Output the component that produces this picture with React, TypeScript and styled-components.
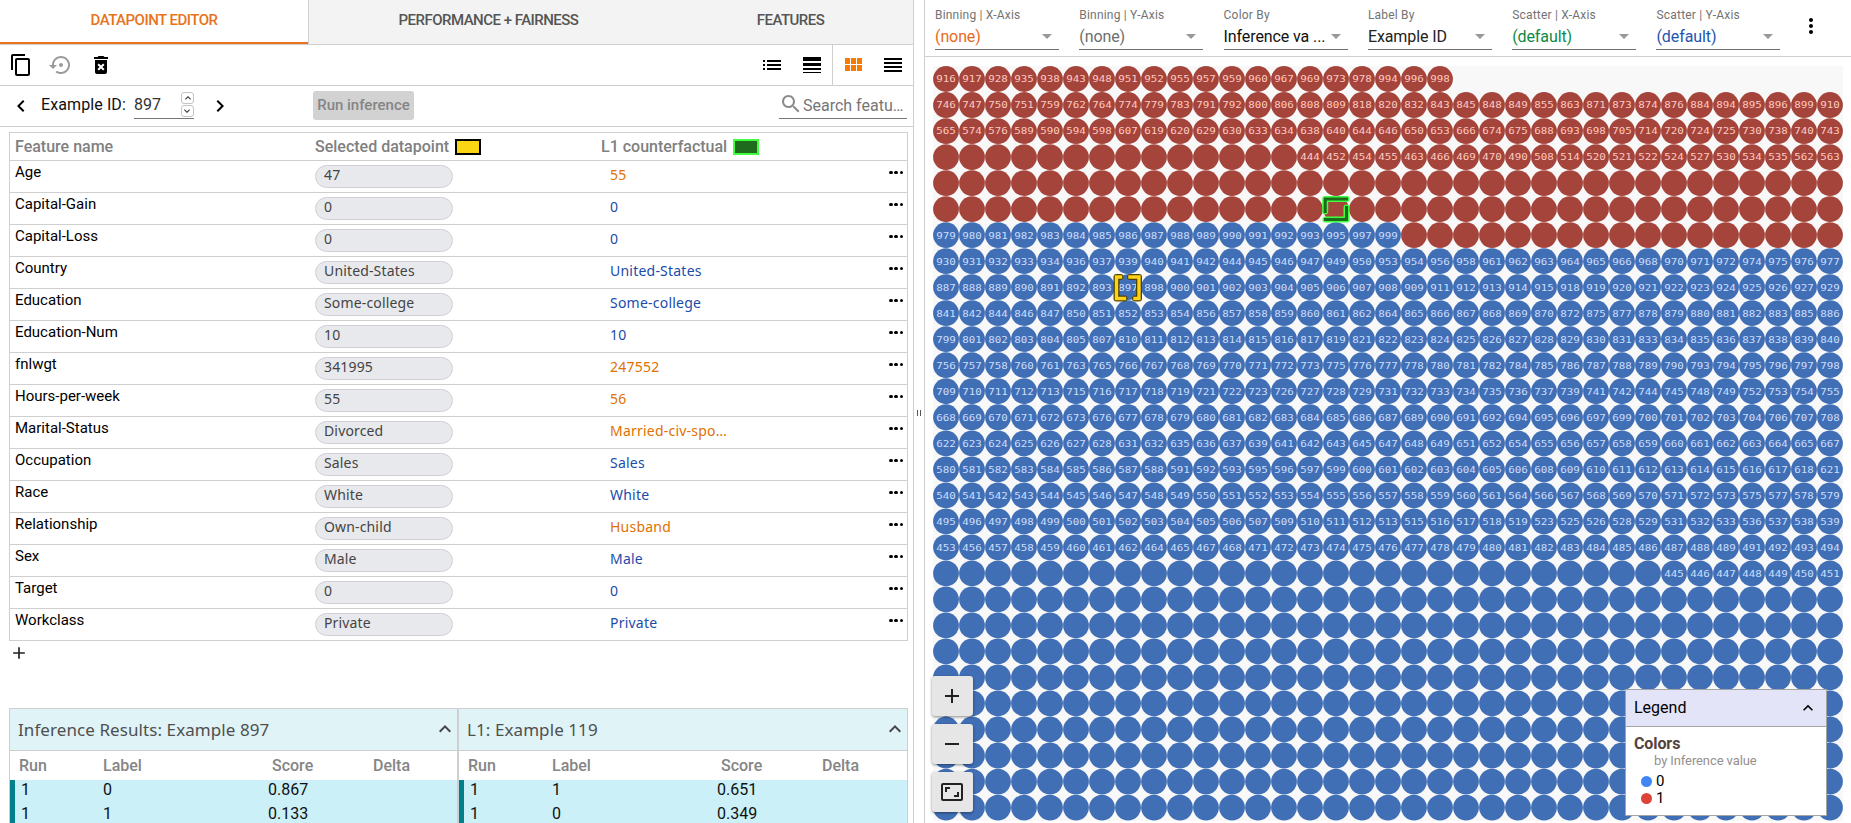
import React from "react";
import styled, { createGlobalStyle } from "styled-components";

const LINE = "#cfcfcf";
const HUMANIST = '"Noto Sans", "Open Sans", sans-serif';

const GlobalStyle = createGlobalStyle`
  *, *::before, *::after { box-sizing: border-box; }
  html, body { margin: 0; padding: 0; background: #fff; overflow: hidden; }
  body { font-family: Roboto, "Liberation Sans", sans-serif; color: #000; }
`;

/* ---------- data ---------- */

const FEATURES: { name: string; value: string; other: string; changed?: boolean }[] = [
  { name: "Age", value: "47", other: "55", changed: true },
  { name: "Capital-Gain", value: "0", other: "0" },
  { name: "Capital-Loss", value: "0", other: "0" },
  { name: "Country", value: "United-States", other: "United-States" },
  { name: "Education", value: "Some-college", other: "Some-college" },
  { name: "Education-Num", value: "10", other: "10" },
  { name: "fnlwgt", value: "341995", other: "247552", changed: true },
  { name: "Hours-per-week", value: "55", other: "56", changed: true },
  { name: "Marital-Status", value: "Divorced", other: "Married-civ-spo…", changed: true },
  { name: "Occupation", value: "Sales", other: "Sales" },
  { name: "Race", value: "White", other: "White" },
  { name: "Relationship", value: "Own-child", other: "Husband", changed: true },
  { name: "Sex", value: "Male", other: "Male" },
  { name: "Target", value: "0", other: "0" },
  { name: "Workclass", value: "Private", other: "Private" },
];

const CONTROLS = [
  { label: "Binning | X-Axis", value: "(none)", color: "#e8681a" },
  { label: "Binning | Y-Axis", value: "(none)", color: "#6e6e6e" },
  { label: "Color By", value: "Inference va ...", color: "#111" },
  { label: "Label By", value: "Example ID", color: "#222" },
  { label: "Scatter | X-Axis", value: "(default)", color: "#0e8a44" },
  { label: "Scatter | Y-Axis", value: "(default)", color: "#2454b0" },
];

const RESULTS = [
  { title: "Inference Results: Example 897", width: 449, rows: [["1", "0", "0.867"], ["1", "1", "0.133"]] },
  { title: "L1: Example 119", width: 450, rows: [["1", "1", "0.651"], ["1", "0", "0.349"]] },
];

const COLS = 35;
const ROWS = 29;
const PITCH = 26;

const RED_ROWS = [
  "916 917 928 935 938 943 948 951 952 955 957 959 960 967 969 973 978 994 996 998",
  "746 747 750 751 759 762 764 774 779 783 791 792 800 806 808 809 818 820 832 843 845 848 849 855 863 871 873 874 876 884 894 895 896 899 910",
  "565 574 576 589 590 594 598 607 619 620 629 630 633 634 638 640 644 646 650 653 666 674 675 688 693 698 705 714 720 724 725 730 738 740 743",
  "444 452 454 455 463 466 469 470 490 508 514 520 521 522 524 527 530 534 535 562 563",
].map((r) => r.split(" ").map(Number));

type Dot = { col: number; row: number; red: boolean; id?: number };

function buildDots(): Dot[] {
  const redIds = new Set(RED_ROWS.flat());
  const blueIds: number[] = [];
  for (let i = 445; i <= 999; i++) if (!redIds.has(i)) blueIds.push(i);
  const dots: Dot[] = [];
  for (let row = 0; row < ROWS; row++) {
    for (let col = 0; col < COLS; col++) {
      if (row === 0 && col > 19) continue;
      const red = row < 6 || (row === 6 && col > 17);
      let id: number | undefined;
      if (red) {
        if (row < 3) id = RED_ROWS[row][col];
        else if (row === 3) id = RED_ROWS[3][col - 14];
      } else {
        // blue labels run upwards from the end of row 19
        id = blueIds[(19 - row) * COLS + col - 28];
      }
      dots.push({ col, row, red, id });
    }
  }
  return dots;
}

const DOTS = buildDots();

/* ---------- icons ---------- */

const ICONS = {
  copy: "M16 1H4c-1.1 0-2 .9-2 2v14h2V3h12V1zm3 4H8c-1.1 0-2 .9-2 2v14c0 1.1.9 2 2 2h11c1.1 0 2-.9 2-2V7c0-1.1-.9-2-2-2zm0 16H8V7h11v14z",
  restore:
    "M14 12c0-1.1-.9-2-2-2s-2 .9-2 2 .9 2 2 2 2-.9 2-2zm-2-9c-4.97 0-9 4.03-9 9H0l4 4 4-4H5c0-3.87 3.13-7 7-7s7 3.13 7 7-3.13 7-7 7c-1.51 0-2.91-.49-4.06-1.3l-1.42 1.44C8.04 20.3 9.94 21 12 21c4.97 0 9-4.03 9-9s-4.03-9-9-9z",
  remove:
    "M6 19c0 1.1.9 2 2 2h8c1.1 0 2-.9 2-2V7H6v12zm2.46-7.12l1.41-1.41L12 12.59l2.12-2.12 1.41 1.41L13.41 14l2.12 2.12-1.41 1.41L12 15.41l-2.12 2.12-1.41-1.41L10.59 14l-2.13-2.12zM15.5 4l-1-1h-5l-1 1H5v2h14V4z",
  list: "M3 13h2v-2H3v2zm0 4h2v-2H3v2zm0-8h2V7H3v2zm4 4h14v-2H7v2zm0 4h14v-2H7v2zM7 7v2h14V7H7z",
  weight: "M3 17h18v-2H3v2zm0 3h18v-1H3v1zm0-7h18v-3H3v3zm0-9v4h18V4H3z",
  grid: "M4 11h5V5H4v6zm0 7h5v-6H4v6zm6 0h5v-6h-5v6zm6 0h5v-6h-5v6zm-6-7h5V5h-5v6zm6-6v6h5V5h-5z",
  reorder: "M3 15h18v-2H3v2zm0 4h18v-2H3v2zm0-8h18V9H3v2zm0-6v2h18V5H3z",
  left: "M15.41 7.41L14 6l-6 6 6 6 1.41-1.41L10.83 12z",
  right: "M10 6L8.59 7.41 13.17 12l-4.58 4.59L10 18l6-6z",
  up: "M12 8l-6 6 1.41 1.41L12 10.83l4.59 4.58L18 14z",
  search:
    "M15.5 14h-.79l-.28-.27C15.41 12.59 16 11.11 16 9.5 16 5.91 13.09 3 9.5 3S3 5.91 3 9.5 5.91 16 9.5 16c1.61 0 3.09-.59 4.23-1.57l.27.28v.79l5 4.99L20.49 19l-4.99-5zm-6 0C7.01 14 5 11.99 5 9.5S7.01 5 9.5 5 14 7.01 14 9.5 11.99 14 9.5 14z",
  more: "M12 8c1.1 0 2-.9 2-2s-.9-2-2-2-2 .9-2 2 .9 2 2 2zm0 2c-1.1 0-2 .9-2 2s.9 2 2 2 2-.9 2-2-.9-2-2-2zm0 6c-1.1 0-2 .9-2 2s.9 2 2 2 2-.9 2-2-.9-2-2-2z",
  plus: "M19 13h-6v6h-2v-6H5v-2h6V5h2v6h6v2z",
  minus: "M19 13H5v-2h14v2z",
  fit: "M19 12h-2v3h-3v2h5v-5zM7 9h3V7H5v5h2V9zm14-6H3c-1.1 0-2 .9-2 2v14c0 1.1.9 2 2 2h18c1.1 0 2-.9 2-2V5c0-1.1-.9-2-2-2zm0 16.01H3V4.99h18v14.02z",
};

const Svg = styled.svg`
  display: block;
  flex: none;
`;

function Icon({ name, size = 24, color = "#000" }: { name: keyof typeof ICONS; size?: number; color?: string }) {
  return (
    <Svg width={size} height={size} viewBox="0 0 24 24" fill={color}>
      <path d={ICONS[name]} />
    </Svg>
  );
}

/* ---------- frame ---------- */

const Page = styled.div`
  display: flex;
  width: 1851px;
  height: 823px;
  overflow: hidden;
`;

const Editor = styled.section`
  display: flex;
  flex-direction: column;
  width: 914px;
  border-right: 1px solid ${LINE};
  & > * {
    flex: none;
  }
`;

const Splitter = styled.div`
  display: flex;
  align-items: center;
  justify-content: center;
  gap: 2px;
  width: 10px;
  padding: 2px 1px 0 0;
`;

const Grip = styled.span`
  width: 1px;
  height: 6px;
  background: #555;
`;

const Visual = styled.section`
  display: flex;
  flex-direction: column;
  flex: 1;
  border-left: 1px solid ${LINE};
`;

/* ---------- editor ---------- */

const Tabs = styled.nav`
  display: flex;
  height: 45px;
  border-bottom: 1px solid ${LINE};
`;

const Tab = styled.div<{ $width: number; $active?: boolean }>`
  width: ${(p) => p.$width}px;
  padding-top: 10px;
  text-align: center;
  font-size: 15px;
  line-height: 20px;
  letter-spacing: -0.52px;
  font-weight: 500;
  color: ${(p) => (p.$active ? "#e8731c" : "#555")};
  background: ${(p) => (p.$active ? "#fff" : "#f3f3f3")};
  border-bottom: ${(p) => (p.$active ? "2px solid #e8731c" : "0")};
`;

const TabDivider = styled.div`
  width: 1px;
  background: ${LINE};
`;

const Toolbar = styled.div`
  display: flex;
  align-items: center;
  justify-content: space-between;
  height: 41px;
  padding: 0 8px 0 9px;
  border-bottom: 1px solid ${LINE};
`;

const IconGroup = styled.div<{ $divided?: boolean }>`
  display: flex;
  align-items: center;
  gap: 16px;
  height: 40px;
  padding-left: ${(p) => (p.$divided ? 8 : 0)}px;
  margin-left: ${(p) => (p.$divided ? 8 : 0)}px;
  border-left: ${(p) => (p.$divided ? `1px solid ${LINE}` : "0")};
`;

const ToolSet = styled.div`
  display: flex;
  height: 40px;
`;

const PickerBar = styled.div`
  display: flex;
  height: 41px;
  padding: 0 6px 0 9px;
  border-bottom: 1px solid ${LINE};
`;

const Step = styled.div`
  padding-top: 8px;
`;

const PickerLabel = styled.label`
  flex: none;
  width: 101px;
  padding: 9px 0 0 8px;
  font-size: 16px;
  line-height: 20px;
  color: #111;
  letter-spacing: 0.1px;
  white-space: nowrap;
`;

const NumberField = styled.div`
  display: flex;
  justify-content: space-between;
  width: 60px;
  height: 33px;
  margin-right: 14px;
  padding: 6px 0 0;
  border-bottom: 1px solid #777;
`;

const NumberText = styled.span`
  padding-top: 3px;
  font-size: 16px;
  line-height: 20px;
  color: #333;
`;

const Spinner = styled.span`
  display: flex;
  flex-direction: column;
  gap: 1px;
`;

const SpinButton = styled.span<{ $down?: boolean }>`
  display: flex;
  align-items: center;
  justify-content: center;
  width: 13px;
  height: 12px;
  border: 1px solid #c4c4c4;
  border-radius: 3px;
  transform: ${(p) => (p.$down ? "rotate(180deg)" : "none")};
`;

const RunButton = styled.button`
  width: 101px;
  height: 29px;
  margin: 5px 0 0 81px;
  padding: 0 0 1px;
  border: 0;
  border-radius: 3px;
  background: #d2d2d2;
  color: #858585;
  font: 500 15px/28px Roboto, sans-serif;
  white-space: nowrap;
`;

const SearchField = styled.div`
  display: flex;
  width: 128px;
  height: 33px;
  margin-left: auto;
  padding-top: 6px;
  border-bottom: 1px solid #777;
`;

const SearchText = styled.span`
  padding-top: 4px;
  font-size: 16px;
  line-height: 20px;
  color: #767676;
  white-space: nowrap;
`;

const Table = styled.div`
  margin: 5px 5px 0 9px;
  border: 1px solid ${LINE};
`;

const TableRow = styled.div<{ $head?: boolean }>`
  display: flex;
  height: ${(p) => (p.$head ? 27 : 32)}px;
  ${(p) => (p.$head ? "color: #808080; font-size: 16px;" : "")}
  & + & {
    border-top: 1px solid ${LINE};
  }
`;

const HeadCell = styled.div<{ $width: number; $inset?: number }>`
  display: flex;
  align-items: center;
  gap: 6px;
  width: ${(p) => p.$width}px;
  padding-left: ${(p) => p.$inset ?? 0}px;
  font-weight: 500;
  line-height: 26px;
  white-space: nowrap;
`;

const Swatch = styled.span<{ $fill: string; $edge: string }>`
  width: 26px;
  height: 16px;
  margin-top: 1px;
  background: ${(p) => p.$fill};
  border: 2px solid ${(p) => p.$edge};
`;

const NameCell = styled.div`
  width: 305px;
  padding: 2px 0 0 5px;
  font-size: 15px;
  line-height: 18px;
`;

const Pill = styled.div`
  width: 138px;
  height: 23px;
  margin-top: 4px;
  padding-left: 8px;
  border: 1px solid #d0d0d2;
  border-radius: 12px;
  background: #e8e9ec;
  color: #444;
  font: 14px/18px ${HUMANIST};
  letter-spacing: 0.15px;
`;

const OtherCell = styled.div<{ $changed?: boolean }>`
  flex: 1;
  padding: 3px 0 0 157px;
  color: ${(p) => (p.$changed ? "#e07000" : "#1b4bab")};
  font: 14px/22px ${HUMANIST};
  letter-spacing: 0.22px;
`;

const MoreCell = styled.div`
  display: flex;
  gap: 1.8px;
  padding: 10px 4px 0 0;
`;

const MoreDot = styled.span`
  width: 3.4px;
  height: 3.4px;
  border-radius: 50%;
  background: #000;
`;

const AddRow = styled.div`
  height: 67px;
  padding: 2px 0 0 9px;
`;

const Results = styled.div`
  display: flex;
  margin: 0 5px 0 9px;
`;

const ResultPanel = styled.div<{ $width: number }>`
  width: ${(p) => p.$width}px;
  height: 115px;
  border: 1px solid ${LINE};
  border-bottom: 0;
`;

const ResultHead = styled.div`
  display: flex;
  justify-content: space-between;
  height: 42px;
  padding: 8px 0 0 8px;
  background: #e0f3f7;
  border-bottom: 1px solid ${LINE};
  color: #4f4f4f;
  font: 17px/25px ${HUMANIST};
  letter-spacing: 0.08px;
`;

const ResultIcon = styled.div`
  width: 24px;
`;

const ResultRow = styled.div<{ $head?: boolean }>`
  display: grid;
  grid-template-columns: ${(p) => (p.$head ? "84px 169px 101px 1fr" : "82px 165px 101px 1fr")};
  height: ${(p) => (p.$head ? 29 : 24)}px;
  padding-left: ${(p) => (p.$head ? 9 : 6)}px;
  font-size: 16px;
  line-height: ${(p) => (p.$head ? 30 : 20)}px;
  font-weight: ${(p) => (p.$head ? 500 : 400)};
  color: ${(p) => (p.$head ? "#858585" : "#111")};
  background: ${(p) => (p.$head ? "#fff" : "#cbf0f7")};
  border-left: ${(p) => (p.$head ? "0" : "5px solid #00808a")};
`;

/* ---------- visualization ---------- */

const ControlBar = styled.div`
  display: flex;
  gap: 20.3px;
  height: 57px;
  padding-left: 10px;
  border-bottom: 1px solid ${LINE};
`;

const Control = styled.div`
  display: flex;
  flex-direction: column;
  width: 124px;
  height: 50px;
  padding-top: 7px;
  border-bottom: 1px solid #707070;
`;

const ControlLabel = styled.span`
  font-size: 12px;
  line-height: 16px;
  letter-spacing: 0.2px;
  color: #737373;
`;

const ControlValue = styled.span<{ $color: string }>`
  display: flex;
  justify-content: space-between;
  align-items: center;
  height: 26px;
  padding-right: 7px;
  font-size: 16px;
  letter-spacing: -0.1px;
  color: ${(p) => p.$color};
  white-space: nowrap;
`;

const Caret = styled.i`
  border: 5px solid transparent;
  border-top-color: #999;
  border-bottom: 0;
`;

const MenuButton = styled.div`
  margin-left: -2px;
  padding-top: 14px;
`;

const Stage = styled.div`
  position: relative;
  flex: 1;
  padding: 9px 0 0 8px;
`;

const Chart = styled.svg`
  display: block;
  background: #f8f8f8;
`;

const ZoomButtons = styled.div`
  position: absolute;
  left: 7px;
  bottom: 11px;
  display: flex;
  flex-direction: column;
  gap: 8px;
`;

const ZoomButton = styled.div`
  display: flex;
  align-items: center;
  justify-content: center;
  width: 41px;
  height: 40px;
  padding-right: 1px;
  border-radius: 3px;
  background: #e6e6e6;
  box-shadow: 0 1px 3px rgba(0, 0, 0, 0.45);
`;

const Legend = styled.div`
  position: absolute;
  right: 24px;
  bottom: 7px;
  width: 202px;
  height: 127px;
  background: #fff;
  border: 1px solid #a4a4a4;
`;

const LegendHead = styled.div`
  display: flex;
  align-items: center;
  justify-content: space-between;
  height: 37px;
  padding: 0 8px 1px;
  background: #e4e4f8;
  border-bottom: 1px solid #a4a4a4;
  font-size: 16px;
`;

const LegendTitle = styled.div`
  padding: 7px 0 0 8px;
  font-size: 16px;
  line-height: 20px;
  font-weight: 700;
  letter-spacing: -0.1px;
  color: #54423e;
`;

const LegendNote = styled.div`
  padding: 0 0 4px 28px;
  font-size: 13px;
  line-height: 14px;
  letter-spacing: -0.1px;
  color: #969090;
`;

const LegendItem = styled.div`
  display: flex;
  align-items: center;
  gap: 4px;
  height: 17px;
  padding-left: 15px;
  font-size: 15px;
`;

const LegendDot = styled.span<{ $color: string }>`
  width: 11px;
  height: 11px;
  margin-top: 1px;
  border-radius: 50%;
  background: ${(p) => p.$color};
`;

const SELECTED_MARK = "M187.5 211H183.5V232.5H191.5M197 211H206V232.5H202";
const COUNTERFACTUAL_MARK = "M413.5 133H392.2V145.5M413.5 141.5V153.5H392.5";

function DotChart() {
  return (
    <Chart width={COLS * PITCH} height={ROWS * PITCH + 1} viewBox={`0 0 ${COLS * PITCH} ${ROWS * PITCH + 1}`}>
      {DOTS.map(({ col, row, red, id }) => {
        const cx = col * PITCH + 13;
        const cy = row * (PITCH + 0.02) + 13;
        return (
          <g key={`${col}-${row}`}>
            <circle cx={cx} cy={cy} r={12.9} fill={red ? "#a5443b" : "#416fb6"} />
            {id !== undefined && (
              <text
                x={cx - 9.8}
                y={cy + 3.4}
                fontFamily='"DejaVu Sans Mono", monospace'
                fontSize={9.4}
                textLength={19.6}
                lengthAdjust="spacingAndGlyphs"
                fill={red ? "#ffc9c1" : "#cadeff"}
              >
                {id}
              </text>
            )}
          </g>
        );
      })}
      <g fill="none" strokeLinecap="round" strokeLinejoin="round">
        <path d={SELECTED_MARK} stroke="#4d4300" strokeWidth={6} />
        <path d={SELECTED_MARK} stroke="#ffd21a" strokeWidth={3.4} strokeLinecap="square" strokeLinejoin="miter" />
        <path d={COUNTERFACTUAL_MARK} stroke="#3dff3d" strokeWidth={6} />
        <path d={COUNTERFACTUAL_MARK} stroke="#1c6b1c" strokeWidth={3} strokeLinecap="square" strokeLinejoin="miter" />
      </g>
    </Chart>
  );
}

export default function App() {
  return (
    <>
      <GlobalStyle />
      <Page>
        <Editor>
          <Tabs>
            <Tab $width={308} $active>DATAPOINT EDITOR</Tab>
            <TabDivider />
            <Tab $width={359}>PERFORMANCE + FAIRNESS</Tab>
            <Tab $width={245}>FEATURES</Tab>
          </Tabs>
          <Toolbar>
            <IconGroup>
              <Icon name="copy" />
              <Icon name="restore" color="#9a9a9a" />
              <Icon name="remove" />
            </IconGroup>
            <ToolSet>
              <IconGroup>
                <Icon name="list" />
                <Icon name="weight" />
              </IconGroup>
              <IconGroup $divided>
                <Icon name="grid" color="#f57c00" />
                <Icon name="reorder" />
              </IconGroup>
            </ToolSet>
          </Toolbar>
          <PickerBar>
            <Step><Icon name="left" /></Step>
            <PickerLabel>Example ID:</PickerLabel>
            <NumberField>
              <NumberText>897</NumberText>
              <Spinner>
                <SpinButton><Icon name="up" size={12} color="#333" /></SpinButton>
                <SpinButton $down><Icon name="up" size={12} color="#333" /></SpinButton>
              </Spinner>
            </NumberField>
            <Step><Icon name="right" /></Step>
            <RunButton>Run inference</RunButton>
            <SearchField>
              <Icon name="search" color="#8c8c8c" />
              <SearchText>Search featu…</SearchText>
            </SearchField>
          </PickerBar>
          <Table>
            <TableRow $head>
              <HeadCell $width={305} $inset={5}>Feature name</HeadCell>
              <HeadCell $width={286}>Selected datapoint<Swatch $fill="#fad514" $edge="#000" /></HeadCell>
              <HeadCell $width={200}>L1 counterfactual<Swatch $fill="#1e6b1e" $edge="#40ff40" /></HeadCell>
            </TableRow>
            {FEATURES.map((f) => (
              <TableRow key={f.name}>
                <NameCell>{f.name}</NameCell>
                <Pill>{f.value}</Pill>
                <OtherCell $changed={f.changed}>{f.other}</OtherCell>
                <MoreCell><MoreDot /><MoreDot /><MoreDot /></MoreCell>
              </TableRow>
            ))}
          </Table>
          <AddRow><Icon name="plus" size={20} color="#222" /></AddRow>
          <Results>
            {RESULTS.map((r) => (
              <ResultPanel key={r.title} $width={r.width}>
                <ResultHead>
                  {r.title}
                  <ResultIcon><Icon name="up" color="#444" /></ResultIcon>
                </ResultHead>
                <ResultRow $head>
                  <span>Run</span><span>Label</span><span>Score</span><span>Delta</span>
                </ResultRow>
                {r.rows.map((cells, i) => (
                  <ResultRow key={i}>
                    {cells.map((c, j) => <span key={j}>{c}</span>)}
                  </ResultRow>
                ))}
              </ResultPanel>
            ))}
          </Results>
        </Editor>
        <Splitter><Grip /><Grip /></Splitter>
        <Visual>
          <ControlBar>
            {CONTROLS.map((c) => (
              <Control key={c.label}>
                <ControlLabel>{c.label}</ControlLabel>
                <ControlValue $color={c.color}>{c.value}<Caret /></ControlValue>
              </Control>
            ))}
            <MenuButton><Icon name="more" /></MenuButton>
          </ControlBar>
          <Stage>
            <DotChart />
            <ZoomButtons>
              <ZoomButton><Icon name="plus" color="#222" /></ZoomButton>
              <ZoomButton><Icon name="minus" color="#222" /></ZoomButton>
              <ZoomButton><Icon name="fit" color="#222" /></ZoomButton>
            </ZoomButtons>
            <Legend>
              <LegendHead>Legend<Icon name="up" size={20} /></LegendHead>
              <LegendTitle>Colors</LegendTitle>
              <LegendNote>by Inference value</LegendNote>
              <LegendItem><LegendDot $color="#4285f4" />0</LegendItem>
              <LegendItem><LegendDot $color="#db4437" />1</LegendItem>
            </Legend>
          </Stage>
        </Visual>
      </Page>
    </>
  );
}
